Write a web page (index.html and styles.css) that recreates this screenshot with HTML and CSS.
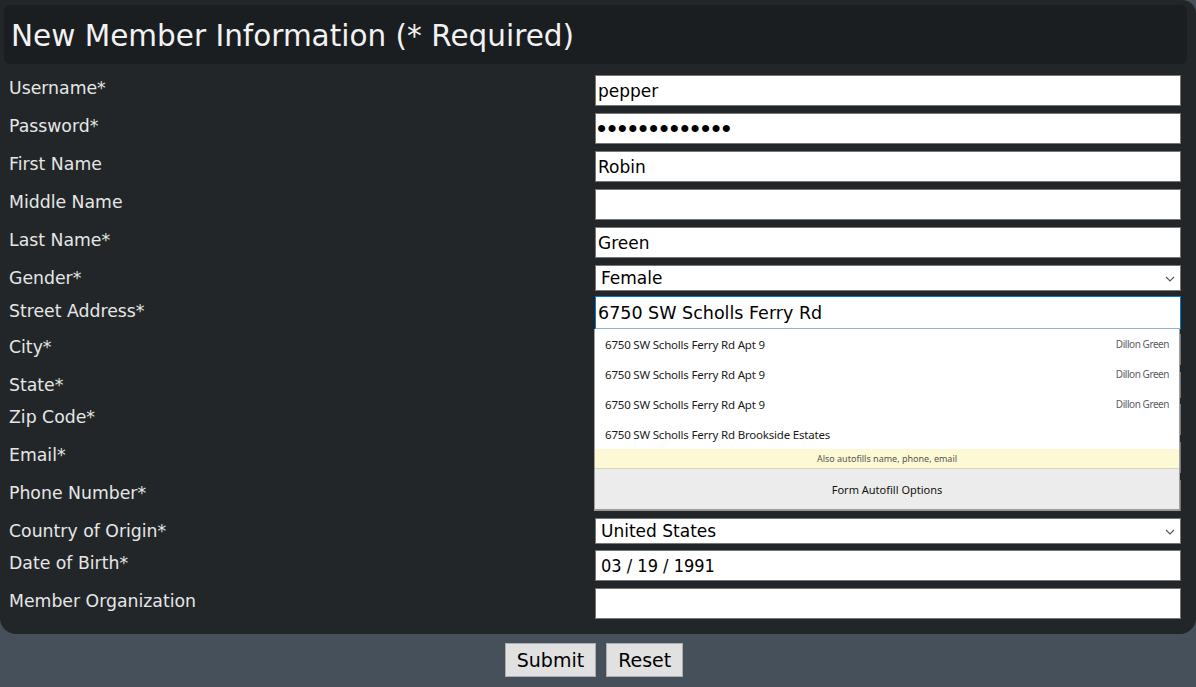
FILE: index.html
```html
<!DOCTYPE html>
<html lang="en">
<head>
<meta charset="utf-8">
<title>New Member Information</title>
<link rel="stylesheet" href="styles.css">
</head>
<body>
<form class="panel">
  <h1 class="title">New Member Information (* Required)</h1>
  <div class="rows">
    <div class="row"><label class="lbl">Username*</label><div class="field"><input class="inp" type="text" value="pepper"></div></div>
    <div class="row"><label class="lbl">Password*</label><div class="field"><input class="inp inp-pass" type="password" value="abcdefghijklm"></div></div>
    <div class="row"><label class="lbl">First Name</label><div class="field"><input class="inp" type="text" value="Robin"></div></div>
    <div class="row"><label class="lbl">Middle Name</label><div class="field"><input class="inp" type="text" value=""></div></div>
    <div class="row"><label class="lbl">Last Name*</label><div class="field"><input class="inp" type="text" value="Green"></div></div>
    <div class="row row-sel"><label class="lbl">Gender*</label><div class="field"><select class="sel"><option>Female</option></select><svg class="chev" width="10" height="6" viewBox="0 0 10 6"><path d="M1 1 L5 5 L9 1" fill="none" stroke="#555" stroke-width="1.1"/></svg></div></div>
    <div class="row row-focus"><label class="lbl lbl-focus">Street Address*</label>
      <div class="field">
        <input class="inp inp-focus" type="text" value="6750 SW Scholls Ferry Rd">
        <div class="popup">
          <div class="opt"><span class="opt-main">6750 SW Scholls Ferry Rd Apt 9</span><span class="opt-sub">Dillon Green</span></div>
          <div class="opt"><span class="opt-main">6750 SW Scholls Ferry Rd Apt 9</span><span class="opt-sub">Dillon Green</span></div>
          <div class="opt"><span class="opt-main">6750 SW Scholls Ferry Rd Apt 9</span><span class="opt-sub">Dillon Green</span></div>
          <div class="opt"><span class="opt-main">6750 SW Scholls Ferry Rd Brookside Estates</span></div>
          <div class="note">Also autofills name, phone, email</div>
          <div class="footer">Form Autofill Options</div>
        </div>
      </div>
    </div>
    <div class="row"><label class="lbl">City*</label><div class="field"><input class="inp" type="text" value=""></div></div>
    <div class="row row-sel"><label class="lbl">State*</label><div class="field"><select class="sel"><option></option></select></div></div>
    <div class="row"><label class="lbl">Zip Code*</label><div class="field"><input class="inp" type="text" value=""></div></div>
    <div class="row"><label class="lbl">Email*</label><div class="field"><input class="inp" type="text" value=""></div></div>
    <div class="row"><label class="lbl">Phone Number*</label><div class="field"><input class="inp" type="text" value=""></div></div>
    <div class="row row-sel"><label class="lbl">Country of Origin*</label><div class="field"><select class="sel"><option>United States</option></select><svg class="chev" width="10" height="6" viewBox="0 0 10 6"><path d="M1 1 L5 5 L9 1" fill="none" stroke="#555" stroke-width="1.1"/></svg></div></div>
    <div class="row"><label class="lbl">Date of Birth*</label><div class="field"><input class="inp inp-date" type="text" value="03 / 19 / 1991"></div></div>
    <div class="row"><label class="lbl">Member Organization</label><div class="field"><input class="inp" type="text" value=""></div></div>
  </div>
</form>
<div class="actions">
  <button class="btn" type="button">Submit</button>
  <button class="btn" type="button">Reset</button>
</div>
</body>
</html>
```

FILE: styles.css
```css
html, body {
  margin: 0;
  padding: 0;
}
body {
  background: #45505a;
  font-family: "DejaVu Sans", Verdana, sans-serif;
  width: 1196px;
  height: 687px;
  overflow: hidden;
}
.panel {
  background: #222629;
  border-radius: 0 14px 16px 16px;
  padding: 5px 15px 11px 4px;
  margin: 0;
}
.title {
  margin: 0;
  background: #1b1e21;
  border-radius: 6px;
  height: 59px;
  width: 1183px;
  box-sizing: border-box;
  color: #f2f2f2;
  font-weight: normal;
  font-size: 29.5px;
  line-height: 63px;
  padding-left: 7px;
}
.rows {
  padding-top: 8px;
  padding-left: 5px;
}
.row {
  display: grid;
  grid-template-columns: 1fr 586px;
  align-items: start;
  height: 38px;
}
.row-sel { height: 32px; }
.row-focus { height: 37px; }
.lbl {
  color: #e6e6e6;
  font-size: 17.3px;
  padding-top: 6px;
  line-height: 20px;
}
.lbl-focus { padding-top: 7px; }
.field {
  position: relative;
  padding-top: 3px;
}
.inp {
  display: block;
  box-sizing: border-box;
  width: 586px;
  height: 31px;
  margin: 0;
  border: 1px solid #767676;
  background: #fff;
  color: #000;
  font-family: "DejaVu Sans", Verdana, sans-serif;
  font-size: 17px;
  padding: 0 2px;
  outline: none;
}
.inp-pass {
  font-family: "Liberation Sans", Arial, sans-serif;
  font-size: 26px;
  letter-spacing: 1.3px;
  padding-left: 1px;
}
.inp-focus {
  margin-top: -1px;
  height: 33px;
  font-size: 17.5px;
  border: 1px solid #0078d7;
  border-bottom-color: #8fb3d6;
}
.inp-date {
  font-family: "Liberation Sans Narrow", "DejaVu Sans Condensed", sans-serif;
  font-size: 18px;
  padding-left: 5px;
}
.sel {
  display: block;
  box-sizing: border-box;
  width: 586px;
  height: 26px;
  margin: 0;
  border: 1px solid #767676;
  background: #fff;
  color: #000;
  font-family: "DejaVu Sans", Verdana, sans-serif;
  font-size: 17px;
  padding: 0 4px 0 5px;
  appearance: none;
  -webkit-appearance: none;
  border-radius: 0;
  outline: none;
}
.chev {
  position: absolute;
  right: 6px;
  top: 14px;
}
.popup {
  position: absolute;
  left: -1px;
  top: 35px;
  width: 586px;
  box-sizing: border-box;
  background: #fff;
  border: 1px solid #a0a0a0;
  border-top: none;
  border-bottom: 2px solid #9a9a9a;
  font-family: "Noto Sans", "Open Sans", sans-serif;
  z-index: 5;
}
.opt {
  display: flex;
  justify-content: space-between;
  align-items: center;
  height: 30px;
  padding: 0 10px 0 10px;
}
.opt-main {
  font-size: 11.5px;
  color: #1a1a1a;
  letter-spacing: -0.2px;
}
.opt-sub {
  font-size: 10px;
  color: #5c5c5c;
  letter-spacing: -0.45px;
}
.note {
  background: #fdf9d4;
  border-bottom: 1px solid #d9d6bd;
  height: 19px;
  line-height: 19px;
  text-align: center;
  font-size: 9px;
  color: #555;
}
.footer {
  background: #ececec;
  height: 40px;
  line-height: 42px;
  text-align: center;
  font-size: 11px;
  color: #111;
}
.actions {
  display: flex;
  justify-content: center;
  gap: 10px;
  padding-top: 9px;
  padding-right: 8px;
}
.btn {
  font-family: "DejaVu Sans", Verdana, sans-serif;
  font-size: 19px;
  color: #000;
  background: #e1e1e1;
  border: 1px solid #adadad;
  border-radius: 0;
  height: 34px;
  padding: 0 11px;
}
```
